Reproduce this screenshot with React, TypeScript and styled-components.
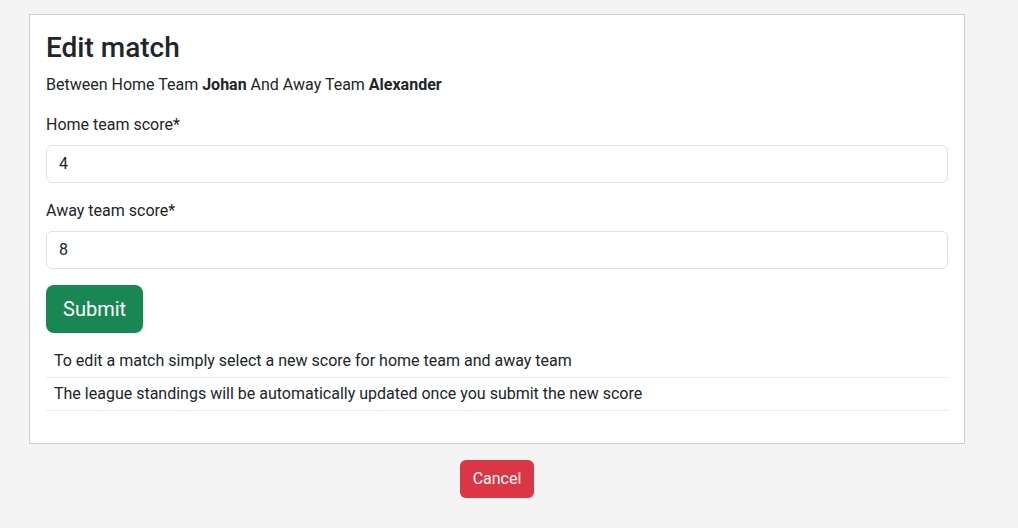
import React from "react";
import styled, { createGlobalStyle } from "styled-components";

const GlobalStyle = createGlobalStyle`
  * { box-sizing: border-box; }
  body {
    margin: 0;
    background: #f4f4f4;
    font-family: Roboto, "Liberation Sans", Arial, sans-serif;
    color: #212529;
    font-size: 16px;
    line-height: 1.5;
  }
`;

const Page = styled.div`
  padding: 14px 0 0 29px;
  width: 965px;
  display: flex;
  flex-direction: column;
  align-items: center;
`;

const Card = styled.div`
  width: 936px;
  background: #fff;
  border: 1px solid #cfcfcf;
  padding: 16px 16px 32px;
  display: flex;
  flex-direction: column;
`;

const Title = styled.h2`
  margin: 0;
  font-size: 28px;
  font-weight: 500;
  line-height: 1.2;
`;

const Subtitle = styled.p`
  margin: 8px 0 16px;
`;

const Label = styled.label`
  display: block;
  margin-bottom: 8px;
`;

const Field = styled.div`
  margin-bottom: 16px;
`;

const Input = styled.input`
  display: block;
  width: 100%;
  height: 38px;
  padding: 6px 12px;
  border: 1px solid #dee2e6;
  border-radius: 6px;
  font: inherit;
  color: #212529;
  outline: none;
`;

const Button = styled.button<{ $variant: "success" | "danger"; $large?: boolean }>`
  align-self: ${(p) => (p.$large ? "flex-start" : "center")};
  border: 1px solid transparent;
  color: #fff;
  background: ${(p) => (p.$variant === "success" ? "#198754" : "#dc3545")};
  font-family: inherit;
  font-size: ${(p) => (p.$large ? "20px" : "16px")};
  line-height: 1.5;
  padding: ${(p) => (p.$large ? "8px 16px" : "6px 12px")};
  border-radius: ${(p) => (p.$large ? "8px" : "6px")};
  cursor: pointer;
`;

const Notes = styled.ul`
  list-style: none;
  margin: 12px 0 0;
  padding: 0;
`;

const Note = styled.li`
  padding: 4px 8px;
  border-bottom: 1px solid #ececec;
`;

const CancelRow = styled.div`
  margin-top: 16px;
`;

const App: React.FC = () => {
  return (
    <>
      <GlobalStyle />
      <Page>
        <Card>
          <Title>Edit match</Title>
          <Subtitle>
            Between Home Team <b>Johan</b> And Away Team <b>Alexander</b>
          </Subtitle>
          <Field>
            <Label>Home team score*</Label>
            <Input defaultValue="4" />
          </Field>
          <Field>
            <Label>Away team score*</Label>
            <Input defaultValue="8" />
          </Field>
          <Button $variant="success" $large>
            Submit
          </Button>
          <Notes>
            <Note>To edit a match simply select a new score for home team and away team</Note>
            <Note>The league standings will be automatically updated once you submit the new score</Note>
          </Notes>
        </Card>
        <CancelRow>
          <Button $variant="danger">Cancel</Button>
        </CancelRow>
      </Page>
    </>
  );
};

export default App;
